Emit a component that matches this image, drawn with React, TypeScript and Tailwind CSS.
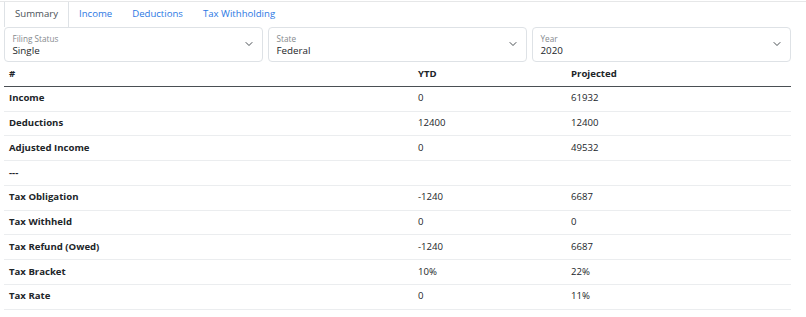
import React from "react";

const rows: [string, string, string][] = [
  ["Income", "0", "61932"],
  ["Deductions", "12400", "12400"],
  ["Adjusted Income", "0", "49532"],
  ["---", "", ""],
  ["Tax Obligation", "-1240", "6687"],
  ["Tax Withheld", "0", "0"],
  ["Tax Refund (Owed)", "-1240", "6687"],
  ["Tax Bracket", "10%", "22%"],
  ["Tax Rate", "0", "11%"],
];

function Chevron() {
  return (
    <svg width="8" height="8" viewBox="0 0 16 16" className="shrink-0">
      <path d="m2 5 6 6 6-6" fill="none" stroke="#343a40" strokeWidth="1.8" strokeLinecap="round" strokeLinejoin="round" />
    </svg>
  );
}

function FloatSelect({ label, value }: { label: string; value: string }) {
  return (
    <div className="flex h-[34.8px] w-[259px] items-center justify-between rounded-[4px] border border-[#dee2e6] bg-white pl-[7.5px] pr-[9px]">
      <div className="flex flex-col pt-[3px]">
        <span className="text-[8.2px] leading-[11px] text-[#85898d]">{label}</span>
        <span className="text-[9.8px] leading-[14px] text-[#212529]">{value}</span>
      </div>
      <Chevron />
    </div>
  );
}

export default function App() {
  return (
    <div
      className="h-[317px] w-[806px] overflow-hidden bg-white text-[#212529]"
      style={{ fontFamily: '"Open Sans", "Noto Sans", sans-serif' }}
    >
      <div className="mt-[1px] border-t border-[#e6e7e8]">
        <div className="ml-[4px] w-[787px]">
          <div className="flex h-[25px] text-[9.6px]">
            <div className="flex items-center border-x border-[#dee2e6] px-[10px] text-[#495057]">Summary</div>
            <div className="flex items-center px-[10px] text-[#2b78e4]">Income</div>
            <div className="flex items-center px-[10px] text-[#2b78e4]">Deductions</div>
            <div className="flex items-center px-[10px] text-[#2b78e4]">Tax Withholding</div>
          </div>
          <div className="flex gap-[5px]">
            <FloatSelect label="Filing Status" value="Single" />
            <FloatSelect label="State" value="Federal" />
            <FloatSelect label="Year" value="2020" />
          </div>
          <div className="text-[9.6px]">
            <div className="flex h-[25px] items-center border-b-[1.5px] border-[#4a4f54] font-bold">
              <div className="w-[409px] pl-[5px]">#</div>
              <div className="w-[153px] pl-[5px]">YTD</div>
              <div className="flex-1 pl-[5px]">Projected</div>
            </div>
            {rows.map(([a, b, c]) => (
              <div key={a} className="flex h-[24.75px] items-center border-b border-[#ebedef]">
                <div className="w-[409px] pl-[5px] font-bold">{a}</div>
                <div className="w-[153px] pl-[5px]">{b}</div>
                <div className="flex-1 pl-[5px]">{c}</div>
              </div>
            ))}
          </div>
        </div>
      </div>
    </div>
  );
}
